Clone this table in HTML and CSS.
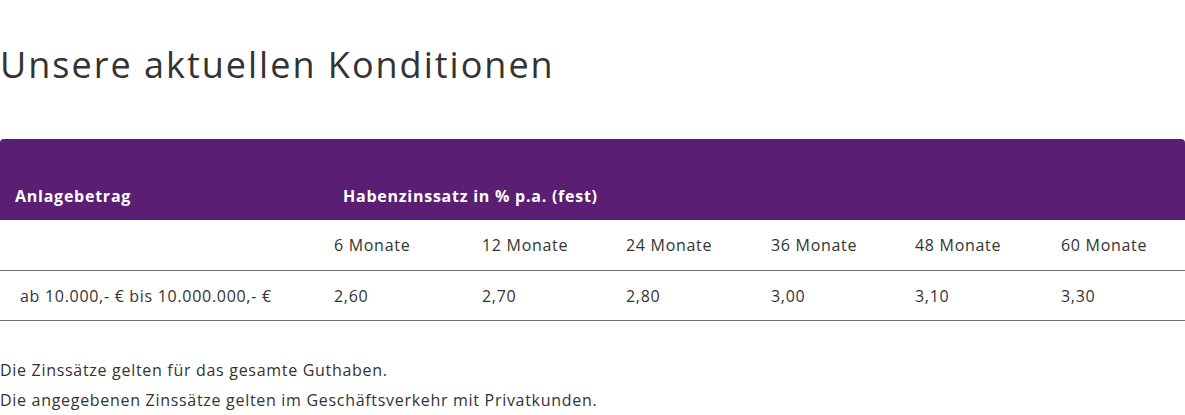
FILE: index.html
```html
<!DOCTYPE html>
<html lang="de">
<head>
<meta charset="utf-8">
<title>Konditionen</title>
<link rel="stylesheet" href="styles.css">
</head>
<body>
<main class="page">
  <h1 class="title">Unsere aktuellen Konditionen</h1>
  <section class="rates">
    <div class="rates-head">
      <div class="head-cell">Anlagebetrag</div>
      <div class="head-cell">Habenzinssatz in % p.a. (fest)</div>
    </div>
    <div class="rates-row rates-row-sub">
      <div class="cell cell-first"></div>
      <div class="cell">6 Monate</div>
      <div class="cell">12 Monate</div>
      <div class="cell">24 Monate</div>
      <div class="cell">36 Monate</div>
      <div class="cell">48 Monate</div>
      <div class="cell">60 Monate</div>
    </div>
    <div class="rates-row">
      <div class="cell cell-first">ab 10.000,- € bis 10.000.000,- €</div>
      <div class="cell">2,60</div>
      <div class="cell">2,70</div>
      <div class="cell">2,80</div>
      <div class="cell">3,00</div>
      <div class="cell">3,10</div>
      <div class="cell">3,30</div>
    </div>
  </section>
  <div class="notes">
    <p>Die Zinssätze gelten für das gesamte Guthaben.</p>
    <p>Die angegebenen Zinssätze gelten im Geschäftsverkehr mit Privatkunden.</p>
  </div>
</main>
</body>
</html>
```
FILE: styles.css
```css
html, body {
  margin: 0;
  padding: 0;
  background: #ffffff;
}
body {
  font-family: "Open Sans", "Noto Sans", sans-serif;
  color: #333333;
  font-size: 16px;
  letter-spacing: 0.7px;
}
.page {
  width: 1185px;
}
.title {
  margin: 0;
  padding-top: 41px;
  font-size: 36px;
  line-height: 48px;
  font-weight: 400;
  letter-spacing: 2px;
  color: #333333;
}
.rates {
  margin-top: 50px;
}
.rates-head {
  background: #5a1e72;
  border-radius: 4px 4px 0 0;
  padding-top: 33px;
  height: 48px;
  display: grid;
  grid-template-columns: 328px 1fr;
  align-items: center;
}
.head-cell {
  color: #ffffff;
  font-weight: 700;
  padding-left: 15px;
  font-size: 16px;
  letter-spacing: 0.75px;
}
.rates-row {
  display: grid;
  grid-template-columns: 328px 148px 144px 145px 144px 146px 1fr;
  height: 49px;
  align-items: center;
  border-bottom: 1px solid #6e6e6e;
}
.rates-row-sub {
  height: 50px;
}
.cell {
  padding-left: 6px;
  font-size: 16px;
}
.cell-first {
  padding-left: 20px;
}
.notes {
  margin-top: 34px;
}
.notes p {
  margin: 0;
  line-height: 30px;
  font-size: 16px;
}
```
